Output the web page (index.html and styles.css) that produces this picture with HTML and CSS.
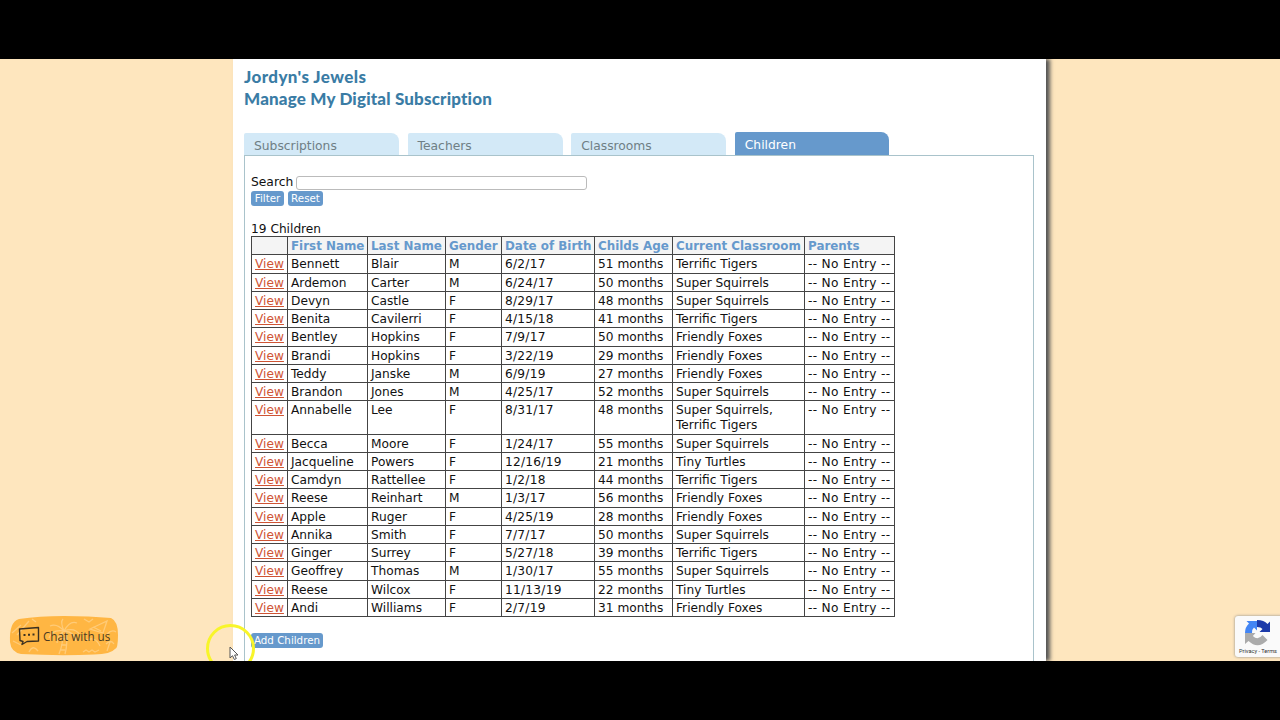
FILE: index.html
```html
<!doctype html>
<html lang="en">
	<head>
		<title>Manage My Digital Subscription</title>
		<meta charset="utf-8" />
		<meta name="viewport" content="width=device-width, initial-scale=1" />
		<link rel="stylesheet" href="styles.css">
	</head>

	<body>
		<div id="screen">
			<div id="container">
				<h1><span class="center">Jordyn's Jewels</span><br><span class="title">Manage My Digital Subscription</span></h1>

				<div class="tabs">
					<a class="tab">Subscriptions</a>
					<a class="tab">Teachers</a>
					<a class="tab">Classrooms</a>
					<a class="tab active">Children</a>
				</div>

				<div class="panel">
					<div class="search"><label for="search">Search</label><input id="search" type="text"></div>
					<div class="buttons"><button class="btn filter">Filter</button><button class="btn reset">Reset</button></div>

					<div class="count">19 Children</div>
					<table>
						<colgroup><col class="c-view"><col class="c-first"><col class="c-last"><col class="c-gender"><col class="c-birth"><col class="c-age"><col class="c-room"><col class="c-parents"></colgroup>
						<tr><th></th><th>First Name</th><th>Last Name</th><th>Gender</th><th>Date of Birth</th><th>Childs Age</th><th>Current Classroom</th><th>Parents</th></tr>
						<tr><td><a>View</a></td><td>Bennett</td><td>Blair</td><td>M</td><td>6/2/17</td><td>51 months</td><td>Terrific Tigers</td><td>-- No Entry --</td></tr>
						<tr><td><a>View</a></td><td>Ardemon</td><td>Carter</td><td>M</td><td>6/24/17</td><td>50 months</td><td>Super Squirrels</td><td>-- No Entry --</td></tr>
						<tr><td><a>View</a></td><td>Devyn</td><td>Castle</td><td>F</td><td>8/29/17</td><td>48 months</td><td>Super Squirrels</td><td>-- No Entry --</td></tr>
						<tr><td><a>View</a></td><td>Benita</td><td>Cavilerri</td><td>F</td><td>4/15/18</td><td>41 months</td><td>Terrific Tigers</td><td>-- No Entry --</td></tr>
						<tr><td><a>View</a></td><td>Bentley</td><td>Hopkins</td><td>F</td><td>7/9/17</td><td>50 months</td><td>Friendly Foxes</td><td>-- No Entry --</td></tr>
						<tr><td><a>View</a></td><td>Brandi</td><td>Hopkins</td><td>F</td><td>3/22/19</td><td>29 months</td><td>Friendly Foxes</td><td>-- No Entry --</td></tr>
						<tr><td><a>View</a></td><td>Teddy</td><td>Janske</td><td>M</td><td>6/9/19</td><td>27 months</td><td>Friendly Foxes</td><td>-- No Entry --</td></tr>
						<tr><td><a>View</a></td><td>Brandon</td><td>Jones</td><td>M</td><td>4/25/17</td><td>52 months</td><td>Super Squirrels</td><td>-- No Entry --</td></tr>
						<tr><td><a>View</a></td><td>Annabelle</td><td>Lee</td><td>F</td><td>8/31/17</td><td>48 months</td><td>Super Squirrels,<br>Terrific Tigers</td><td>-- No Entry --</td></tr>
						<tr><td><a>View</a></td><td>Becca</td><td>Moore</td><td>F</td><td>1/24/17</td><td>55 months</td><td>Super Squirrels</td><td>-- No Entry --</td></tr>
						<tr><td><a>View</a></td><td>Jacqueline</td><td>Powers</td><td>F</td><td>12/16/19</td><td>21 months</td><td>Tiny Turtles</td><td>-- No Entry --</td></tr>
						<tr><td><a>View</a></td><td>Camdyn</td><td>Rattellee</td><td>F</td><td>1/2/18</td><td>44 months</td><td>Terrific Tigers</td><td>-- No Entry --</td></tr>
						<tr><td><a>View</a></td><td>Reese</td><td>Reinhart</td><td>M</td><td>1/3/17</td><td>56 months</td><td>Friendly Foxes</td><td>-- No Entry --</td></tr>
						<tr><td><a>View</a></td><td>Apple</td><td>Ruger</td><td>F</td><td>4/25/19</td><td>28 months</td><td>Friendly Foxes</td><td>-- No Entry --</td></tr>
						<tr><td><a>View</a></td><td>Annika</td><td>Smith</td><td>F</td><td>7/7/17</td><td>50 months</td><td>Super Squirrels</td><td>-- No Entry --</td></tr>
						<tr><td><a>View</a></td><td>Ginger</td><td>Surrey</td><td>F</td><td>5/27/18</td><td>39 months</td><td>Terrific Tigers</td><td>-- No Entry --</td></tr>
						<tr><td><a>View</a></td><td>Geoffrey</td><td>Thomas</td><td>M</td><td>1/30/17</td><td>55 months</td><td>Super Squirrels</td><td>-- No Entry --</td></tr>
						<tr><td><a>View</a></td><td>Reese</td><td>Wilcox</td><td>F</td><td>11/13/19</td><td>22 months</td><td>Tiny Turtles</td><td>-- No Entry --</td></tr>
						<tr><td><a>View</a></td><td>Andi</td><td>Williams</td><td>F</td><td>2/7/19</td><td>31 months</td><td>Friendly Foxes</td><td>-- No Entry --</td></tr>
					</table>
					<button class="btn add">Add Children</button>
				</div>
			</div>

			<!-- chat button -->
			<div class="chat">
				<svg class="chatback" width="110" height="42" viewBox="0 0 110 42">
					<path d="M10 4Q30 1 55 1T102 3Q109 6 109 20T106 34Q102 39 85 39.500Q50 41 12 39Q2 37 1 27Q0 7 10 4Z" fill="#ffb643"/>
					<g fill="none" stroke="#ffcb78" stroke-width="1.300">
						<path d="M55 16Q48 8 41 11M55 16Q43 14 40 23M55 16Q51 7 54 4M55 16Q61 5 68 8M55 16Q66 12 71 20M55 16Q66 17 67 26M55 16Q48 21 48 28"/>
						<path d="M53 17Q55 27 50 39M57 17Q59 28 56 39M53 24h4M52 30h5M51 35h5"/>
						<path d="M3 18l9-8M8 20l12-14M4 26l8 4M81 14l17-8-4 12zM84 12l8 4M75 4l5 3 4-3M98 19q5-5 9-2M76 26q10-6 15 5M98 36l3-9M97 29q5-5 8 0M74 37l3-2 3 2 3-2 3 2 4-2M20 37q4-8 9-1M23 4l4 3"/>
					</g>
				</svg>
				<svg class="bubble" width="22" height="20" viewBox="0 0 22 20">
					<path d="M1.500 3L20.500 1.500V15L9 15.500L4 18.500L5 15.500L2 14.500Z" fill="none" stroke="#3b3020" stroke-width="1.400" stroke-linejoin="round"/>
					<path d="M5.500 9h2M10 8.800h2M14.500 8.500h2" stroke="#3b3020" stroke-width="2"/>
				</svg>
				<span>Chat with us</span>
			</div>

			<!-- recaptcha badge -->
			<div class="captcha">
				<svg width="28" height="28" viewBox="0 0 28 28">
					<path d="M13 1Q20 1 23.500 5L26 2.500V13H15.500L18.500 10Q17 8 13 8Z" fill="#1c3aa9"/>
					<path d="M13 1V11.500L10 8.500Q8 10 8 14H1Q1 8 5 4.500L2.500 2H13Z" fill="#4285f4"/>
					<path d="M1 14H11.500L8.800 17Q14 22 18.500 16L23.500 21Q14 31 4.500 22L1 25Z" fill="#ababab"/>
				</svg>
				<div>Privacy - Terms</div>
			</div>

			<div class="ring"></div>
			<svg class="pointer" width="10" height="15" viewBox="0 0 10 15">
				<path d="M1 1V12L3.500 9.700L5.300 13.500L7.300 12.600L5.600 9H9Z" fill="#fff" stroke="#555" stroke-width="1"/>
			</svg>
		</div>
	</body>
</html>
```
FILE: styles.css
```css
body {
	margin: 0;
	padding: 59px 0;
	background-color: #000;
	font-family: "DejaVu Sans", Verdana, sans-serif;
	font-size: 12.2px;
	color: #111;
}

#screen {
	position: relative;
	height: 602px;
	overflow: hidden;
	background-color: #fee6be;
}

#container {
	box-sizing: border-box;
	width: 813px;
	height: 602px;
	margin-left: 233px;
	padding: 7px 12px 0 11px;
	background-color: #fff;
	box-shadow: 4px 0 4px #555;
}

h1 {
	margin: 0;
	height: 66px;
	font-family: Lato, sans-serif;
	font-weight: 900;
	font-size: 17px;
	letter-spacing: 0.17px;
	line-height: 22px;
	color: #3a7ca5;
	white-space: nowrap;
}

.center {
	letter-spacing: 0.4px;
}

.tabs {
	display: flex;
	align-items: flex-end;
	gap: 8.6px;
	height: 23px;
	font-size: 12.3px;
}

.tab {
	box-sizing: border-box;
	width: 155px;
	height: 22px;
	padding-left: 10px;
	border-radius: 2px 8px 0 0;
	background-color: #d3e9f7;
	line-height: 26px;
	color: #6f7f85;
}

.tab.active {
	width: 154px;
	height: 23px;
	background-color: #6699cc;
	color: #fff;
	line-height: 26px;
}

.panel {
	box-sizing: border-box;
	height: 540px;
	border: 1px solid #a9c3cb;
	padding: 18px 6px 0;
}

.search {
	display: flex;
	align-items: center;
	height: 17px;
	font-size: 12.3px;
}

.search label {
	margin-top: -2px;
}

.search input {
	box-sizing: border-box;
	width: 291px;
	height: 14px;
	margin: 1px 0 0 3px;
	border: 1px solid #bbb;
	border-radius: 3px;
	background-color: #fff;
}

.buttons {
	display: flex;
	gap: 4px;
}

.btn {
	display: block;
	height: 15px;
	padding: 0;
	border: 0;
	border-radius: 3px;
	background-color: #6699cc;
	font-family: inherit;
	font-size: 10.3px;
	line-height: 15px;
	text-align: center;
	white-space: nowrap;
	color: #fff;
}

.filter {
	width: 33px;
}

.reset {
	width: 35px;
}

.count {
	margin-top: 15px;
	height: 15px;
	line-height: 16px;
}

table {
	width: 644px;
	table-layout: fixed;
	border-collapse: collapse;
	line-height: 15px;
}

.c-view { width: 36px; }
.c-first { width: 80px; }
.c-last { width: 78px; }
.c-gender { width: 56px; }
.c-birth { width: 93px; }
.c-age { width: 78px; }
.c-room { width: 132px; }
.c-parents { width: 90px; }

td, th {
	padding: 2px 0 0.26px 3px;
	border: 1px solid #444;
	text-align: left;
	vertical-align: top;
	white-space: nowrap;
}

th {
	height: 15px;
	background-color: #f4f4f4;
	font-size: 11.9px;
	color: #6699cc;
}

td:nth-child(5) {
	letter-spacing: 0.25px;
}

td:nth-child(8) {
	letter-spacing: 0.3px;
}

td a {
	color: #cf5434;
	text-decoration: underline;
}

.add {
	width: 72px;
	margin-top: 16px;
}

.chat {
	position: absolute;
	left: 9px;
	top: 556px;
	display: flex;
	align-items: center;
	width: 110px;
	height: 42px;
	font-family: "Open Sans", sans-serif;
	font-size: 11.7px;
	color: #4a3b22;
}

.chatback {
	position: absolute;
	left: 0;
	top: 0;
}

.bubble {
	position: relative;
	margin: 0 3px 0 9px;
}

.chat span {
	position: relative;
	white-space: nowrap;
}

.captcha {
	position: absolute;
	left: 1235px;
	top: 557px;
	width: 60px;
	height: 41px;
	border-radius: 3px;
	background-color: #fafafa;
	box-shadow: 0 0 3px #888;
}

.captcha svg {
	display: block;
	margin: 3px 0 0 9px;
}

.captcha div {
	padding-left: 4px;
	font-family: Roboto, sans-serif;
	font-size: 5.6px;
	line-height: 8px;
	color: #333;
}

.ring {
	position: absolute;
	left: 206px;
	top: 565px;
	box-sizing: border-box;
	width: 49px;
	height: 49px;
	border: 3px solid #f8f52a;
	border-radius: 50%;
}

.pointer {
	position: absolute;
	left: 229px;
	top: 587px;
}
```
